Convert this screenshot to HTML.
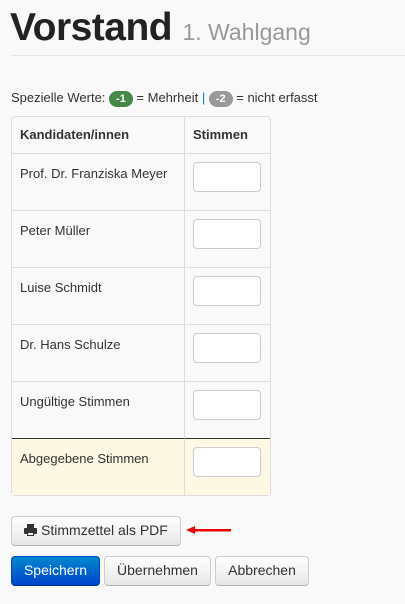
<!DOCTYPE html>
<html><head><meta charset="utf-8"><style>
body{margin:0;background:#f9f9f9;font-family:"Liberation Sans",sans-serif;color:#333;width:405px;height:604px;overflow:hidden;position:relative}
.a{position:absolute}
h1{position:absolute;left:10px;top:6px;margin:0;font-size:39px;font-weight:bold;color:#222;letter-spacing:-0.5px;white-space:nowrap}
h1 small{font-size:23px;font-weight:normal;color:#999;letter-spacing:0}
.hr{left:11px;right:0;top:55px;height:1px;background:#e6e6e6}
.sp{left:11px;top:90px;font-size:13px;white-space:nowrap}
.b{display:inline-block;color:#fff;border-radius:9px;padding:1px 7px;font-size:11px;font-weight:bold;line-height:14px}
table{position:absolute;left:11px;top:116px;border-collapse:separate;border-spacing:0;border:1px solid #ddd;border-radius:4px;font-size:13px;background:#f9f9f9}
td,th{border-left:1px solid #ddd;border-top:1px solid #ddd;text-align:left;vertical-align:top;padding:0 8px}
tr td:first-child,tr th:first-child{border-left:0}
tr:first-child th{border-top:0}
th{height:36px;line-height:36px;font-weight:bold}
td{height:57px;padding-top:12px;box-sizing:border-box}
td.c1{width:172px;padding-top:12px}
td.c2{width:85px;padding-top:8px}
.in{width:66px;height:28px;border:1px solid #ccc;border-radius:4px;background:#fff}
tr.y td{background:#fcf8e3;border-top:1px solid #333}
.btn{position:absolute;box-sizing:border-box;border:1px solid #ccc;border-bottom-color:#b3b3b3;border-radius:4px;background:linear-gradient(#fff,#e6e6e6);font-size:14px;text-align:center;line-height:27px;color:#333}
.pr{background:linear-gradient(#0088cc,#0044cc);color:#fff;border-color:#04c #04c #002a80}
</style></head><body>
<h1>Vorstand <small>1. Wahlgang</small></h1>
<div class="a hr"></div>
<div class="a sp">Spezielle Werte: <span class="b" style="background:#468847">-1</span> = Mehrheit <span style="color:#08c">|</span> <span class="b" style="background:#999">-2</span> = nicht erfasst</div>
<table>
<tr><th style="width:156px">Kandidaten/innen</th><th style="width:69px">Stimmen</th></tr>
<tr><td class="c1">Prof. Dr. Franziska Meyer</td><td class="c2"><div class="in"></div></td></tr>
<tr><td class="c1">Peter Müller</td><td class="c2"><div class="in"></div></td></tr>
<tr><td class="c1">Luise Schmidt</td><td class="c2"><div class="in"></div></td></tr>
<tr><td class="c1">Dr. Hans Schulze</td><td class="c2"><div class="in"></div></td></tr>
<tr><td class="c1">Ungültige Stimmen</td><td class="c2"><div class="in"></div></td></tr>
<tr class="y"><td class="c1">Abgegebene Stimmen</td><td class="c2"><div class="in"></div></td></tr>
</table>
<div class="btn" style="left:11px;top:516px;width:170px;height:30px"><svg width="13" height="12" viewBox="0 0 13 12" style="vertical-align:-1px"><rect x="3" y="0" width="7" height="4" fill="#333"/><rect x="0" y="4" width="13" height="6" rx="1" fill="#333"/><rect x="3" y="8" width="7" height="4" fill="#333"/><rect x="4" y="9" width="5" height="2" fill="#eee"/></svg> Stimmzettel als PDF</div>
<svg class="a" style="left:186px;top:525px" width="46" height="10"><polygon points="0,5 9,1 9,9" fill="#e00"/><rect x="8" y="4" width="37" height="2.5" fill="#e00"/></svg>
<div class="btn pr" style="left:11px;top:556px;width:89px;height:30px">Speichern</div>
<div class="btn" style="left:104px;top:556px;width:107px;height:30px">Übernehmen</div>
<div class="btn" style="left:215px;top:556px;width:94px;height:30px">Abbrechen</div>
</body></html>
